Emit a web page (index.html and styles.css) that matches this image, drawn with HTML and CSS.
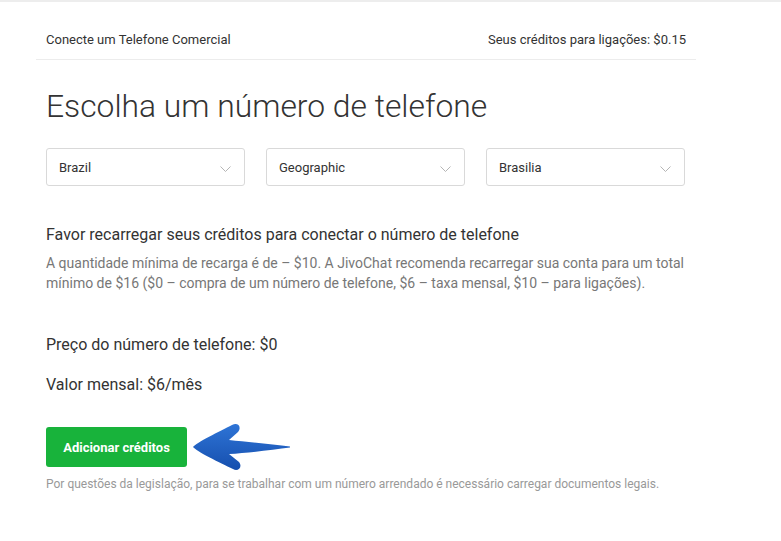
FILE: index.html
```html
<!DOCTYPE html>
<html lang="pt">
<head>
<meta charset="utf-8">
<link rel="stylesheet" href="styles.css">
</head>
<body>
<div class="topline"></div>
<div class="page">
  <header class="header">
    <span>Conecte um Telefone Comercial</span>
    <span>Seus créditos para ligações: $0.15</span>
  </header>
  <main class="content">
    <h1 class="title">Escolha um número de telefone</h1>
    <div class="selects">
      <div class="select"><span>Brazil</span><svg class="chev" viewBox="0 0 11 6" width="11" height="6"><path d="M0.5 0.5 L5.5 5.5 L10.5 0.5" fill="none" stroke="#b5b5b5" stroke-width="1"/></svg></div>
      <div class="select"><span>Geographic</span><svg class="chev" viewBox="0 0 11 6" width="11" height="6"><path d="M0.5 0.5 L5.5 5.5 L10.5 0.5" fill="none" stroke="#b5b5b5" stroke-width="1"/></svg></div>
      <div class="select"><span>Brasilia</span><svg class="chev" viewBox="0 0 11 6" width="11" height="6"><path d="M0.5 0.5 L5.5 5.5 L10.5 0.5" fill="none" stroke="#b5b5b5" stroke-width="1"/></svg></div>
    </div>
    <h2 class="notice">Favor recarregar seus créditos para conectar o número de telefone</h2>
    <p class="desc">A quantidade mínima de recarga é de – $10. A JivoChat recomenda recarregar sua conta para um total mínimo de $16 ($0 – compra de um número de telefone, $6 – taxa mensal, $10 – para ligações).</p>
    <p class="price">Preço do número de telefone: $0</p>
    <p class="price second">Valor mensal: $6/mês</p>
    <div class="action">
      <button class="btn">Adicionar créditos</button>
      <svg class="arrow" viewBox="0 0 100 50" width="100" height="50">
        <defs>
          <linearGradient id="ag" x1="0" y1="0" x2="0" y2="1">
            <stop offset="0" stop-color="#2e74d6"/>
            <stop offset="1" stop-color="#164fae"/>
          </linearGradient>
        </defs>
        <path d="M1 25 C 4 21, 28 9, 40 3 C 46 0, 50 5, 46 10 L 37 18 C 55 20, 80 22, 98 24.5 L 98 25.5 C 80 28, 55 31, 37 32 L 47 40 C 51 45, 46 50, 41 47 C 28 41, 4 29, 1 25 Z" fill="url(#ag)"/>
      </svg>
    </div>
    <p class="foot">Por questões da legislação, para se trabalhar com um número arrendado é necessário carregar documentos legais.</p>
  </main>
</div>
</body>
</html>
```
FILE: styles.css
```css
* { box-sizing: border-box; }
html, body { margin: 0; padding: 0; background: #fff; }
body { font-family: Roboto, "Noto Sans", sans-serif; color: #333; }
.topline { height: 2px; background: #ededed; }
.page { width: 660px; margin-left: 36px; }
.header {
  display: flex; justify-content: space-between;
  height: 58px; padding: 30px 10px 0;
  font-size: 13px; color: #333;
  border-bottom: 1px solid #ececec;
}
.content { padding: 0 10px; }
.title {
  margin: 27px 0 0; font-size: 31.8px; font-weight: 300; color: #333;
  line-height: 38px;
}
.selects { display: flex; gap: 21px; margin-top: 23px; }
.select {
  width: 199px; height: 38px; border: 1px solid #d9d9d9; border-radius: 3px;
  display: flex; align-items: center; justify-content: space-between;
  padding: 0 13px 0 12px; font-size: 13px; color: #333;
}
.chev { margin-top: 3px; }
.notice { margin: 37px 0 0; font-size: 16px; font-weight: 400; line-height: 24px; color: #333; }
.desc { margin: 6px 0 0; font-size: 14px; line-height: 20px; color: #777; }
.price { margin: 40px 0 0; font-size: 16px; line-height: 24px; color: #333; }
.price.second { margin-top: 16px; }
.action { display: flex; align-items: center; margin-top: 30px; }
.btn {
  width: 141px; height: 40px; border: none; border-radius: 3px;
  background: #18b33b; color: #fff; font-family: inherit;
  font-size: 13px; font-weight: 700; padding: 0;
}
.arrow { margin: -5px 0 -5px 5px; }
.foot { margin: 9px 0 0; font-size: 12px; color: #999; line-height: 16px; }
```
